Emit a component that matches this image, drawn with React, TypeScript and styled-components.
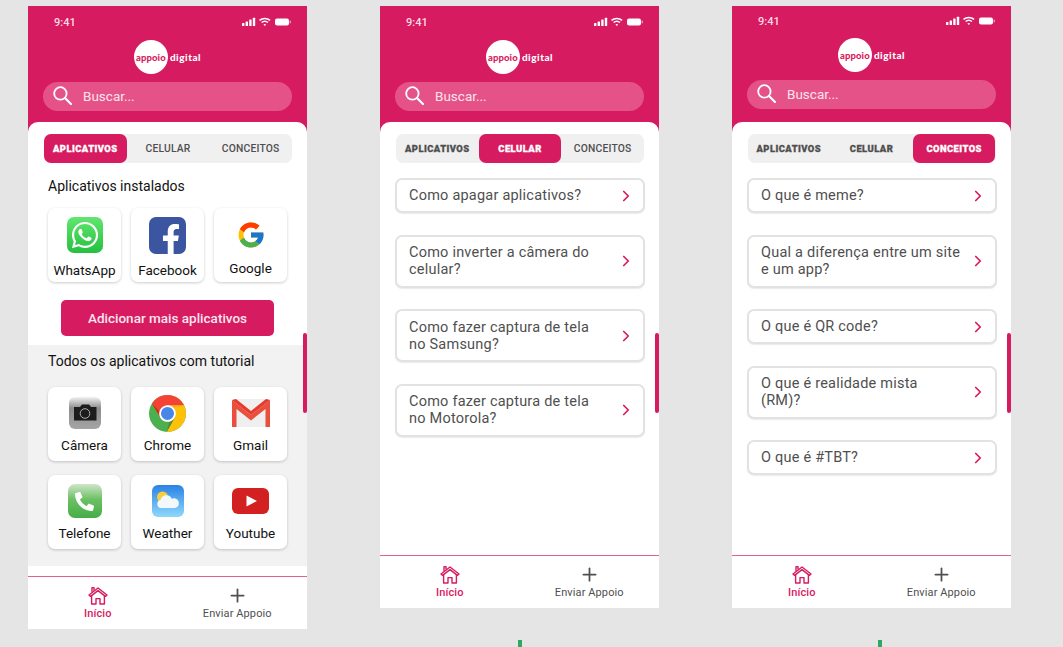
import React from 'react'
import styled, { createGlobalStyle } from 'styled-components'
import { ChevronRight, Plus } from 'lucide-react'
import { FcGoogle } from 'react-icons/fc'
import { FaFacebookF, FaWhatsapp, FaPhoneAlt } from 'react-icons/fa'

const PINK = '#d71b60'

const GlobalStyle = createGlobalStyle`
  html, body {
    margin: 0;
    padding: 0;
    background: #e5e5e5;
    font-family: Roboto, 'Liberation Sans', sans-serif;
  }
`

const Page = styled.div`
  width: 1063px;
  height: 647px;
  box-sizing: border-box;
  padding: 6px 0 0 28px;
  display: flex;
  align-items: flex-start;
  gap: 73px;
  overflow: hidden;
  background: #e5e5e5;
`

const Column = styled.div`
  display: flex;
  flex-direction: column;
  width: 279px;
`

const Phone = styled.div<{ $height: number }>`
  position: relative;
  width: 279px;
  height: ${p => p.$height}px;
  display: flex;
  flex-direction: column;
  background: ${PINK};
  flex-shrink: 0;
`

const Tick = styled.div<{ $left: number }>`
  width: 4px;
  height: 8px;
  margin: 32px 0 0 ${p => p.$left}px;
  background: #2fa866;
`

const ScrollThumb = styled.div`
  position: absolute;
  right: 0;
  top: 327px;
  width: 4px;
  height: 80px;
  border-radius: 2px;
  background: ${PINK};
`

const Header = styled.header<{ $tight?: boolean }>`
  height: 116px;
  box-sizing: border-box;
  flex-shrink: 0;
  padding: ${p => (p.$tight ? '7px' : '8px')} 15px 0;
  display: flex;
  flex-direction: column;
  align-items: center;
`

const StatusBar = styled.div`
  width: 100%;
  height: 16px;
  box-sizing: border-box;
  padding: 0 0 0 11px;
  display: flex;
  align-items: center;
  justify-content: space-between;
  color: #fbdbe6;
  font-size: 11px;
  font-weight: 500;
`

const Logo = styled.div<{ $tight?: boolean }>`
  margin-top: ${p => (p.$tight ? '9px' : '10px')};
  display: flex;
  align-items: center;
  gap: 2px;
`

const LogoCircle = styled.div`
  width: 34px;
  height: 34px;
  border-radius: 50%;
  background: #fff;
  display: flex;
  align-items: center;
  justify-content: center;
  color: ${PINK};
  font-family: Lato, sans-serif;
  font-size: 9.5px;
  font-weight: 900;
  letter-spacing: 0.1px;
`

const LogoWord = styled.span`
  color: #fff;
  font-family: Lato, sans-serif;
  font-size: 10px;
  font-weight: 900;
  letter-spacing: 0.5px;
`

const SearchBar = styled.div`
  width: 249px;
  height: 29px;
  margin-top: 8px;
  box-sizing: border-box;
  padding: 0 0 2px 10px;
  display: flex;
  align-items: center;
  gap: 11px;
  border-radius: 15px;
  background: #e45287;
  color: #fde3ec;
  font-size: 13.5px;
`

const Card = styled.main`
  flex: 1;
  min-height: 0;
  padding-top: 12px;
  background: #fff;
  border-radius: 10px 10px 0 0;
  overflow: hidden;
`

const Tabs = styled.div<{ $inset: number }>`
  width: 248px;
  height: 29px;
  margin-left: ${p => p.$inset}px;
  display: grid;
  grid-template-columns: repeat(3, 1fr);
  border-radius: 7px;
  background: #f0f0f0;
`

const Tab = styled.div<{ $active?: boolean; $blob?: boolean }>`
  display: flex;
  align-items: center;
  justify-content: center;
  border-radius: 7px;
  background: ${p => (p.$active ? PINK : 'transparent')};
  color: ${p => (p.$active ? '#fff' : '#4f4f4f')};
  font-size: ${p => (p.$blob ? '9.4px' : '10.3px')};
  font-weight: ${p => (p.$blob ? 900 : 500)};
  letter-spacing: ${p => (p.$blob ? '0.45px' : '0.2px')};
  -webkit-text-stroke: ${p => (p.$blob ? '0.3px' : '0')};
`

const SectionTitle = styled.h2<{ $top: number }>`
  margin: ${p => p.$top}px 0 0 20px;
  font-size: 14px;
  font-weight: 400;
  line-height: 18px;
  color: #111;
`

const AppGrid = styled.div<{ $top: number }>`
  margin: ${p => p.$top}px 0 0 20px;
  display: grid;
  grid-template-columns: repeat(3, 73px);
  grid-auto-rows: 74px;
  gap: 14px 10px;
`

const AppCard = styled.div<{ $gap: number; $top: number }>`
  box-sizing: border-box;
  padding-top: ${p => p.$top}px;
  display: flex;
  flex-direction: column;
  align-items: center;
  gap: ${p => p.$gap}px;
  border-radius: 7px;
  background: #fff;
  box-shadow: 0 1px 3px rgba(0, 0, 0, 0.2);
`

const AppIconSlot = styled.div`
  height: 40px;
  display: flex;
  align-items: center;
  justify-content: center;
`

const AppLabel = styled.span`
  font-size: 13.5px;
  line-height: 16px;
  color: #111;
`

const Tile = styled.div<{ $bg: string; $size: number }>`
  width: ${p => p.$size}px;
  height: ${p => p.$size}px;
  border-radius: 7px;
  background: ${p => p.$bg};
  display: flex;
  align-items: center;
  justify-content: center;
  overflow: hidden;
  color: #fff;
`

const AddButton = styled.button`
  display: block;
  width: 213px;
  height: 36px;
  margin: 18px 0 9px 33px;
  border: 0;
  border-radius: 5px;
  background: ${PINK};
  color: #fbe6ee;
  font-family: inherit;
  font-size: 13.5px;
  font-weight: 500;
`

const GraySection = styled.section`
  padding: 7px 0 17px;
  background: #f2f2f2;
`

const QuestionList = styled.div`
  margin: 15px 0 0 15px;
  width: 250px;
  display: flex;
  flex-direction: column;
  gap: 21.5px;
`

const Question = styled.div<{ $tall: boolean }>`
  box-sizing: border-box;
  height: ${p => (p.$tall ? 53 : 35)}px;
  padding: 0 8px 0 12px;
  display: flex;
  align-items: center;
  justify-content: space-between;
  border: 2px solid #e2e2e2;
  border-radius: 7px;
  background: #fff;
  box-shadow: 0 1px 1px rgba(0, 0, 0, 0.08);
  color: #4f4f4f;
  font-size: 14.5px;
  line-height: 17px;
  letter-spacing: 0.22px;
  svg {
    flex-shrink: 0;
    color: ${PINK};
  }
`

const QuestionText = styled.span`
  width: 200px;
`

const BottomNav = styled.nav`
  height: 53px;
  flex-shrink: 0;
  box-sizing: border-box;
  display: grid;
  grid-template-columns: 1fr 1fr;
  padding-top: 8px;
  border-top: 1px solid #e0628f;
  background: #fff;
`

const NavItem = styled.div<{ $active?: boolean }>`
  display: flex;
  flex-direction: column;
  align-items: center;
  color: ${p => (p.$active ? PINK : '#4f4f4f')};
  font-size: 11px;
  font-weight: ${p => (p.$active ? 500 : 400)};
  line-height: 14px;
  letter-spacing: 0.1px;
`

const NavIconSlot = styled.div`
  height: 21px;
  margin-bottom: 1px;
  display: flex;
  align-items: center;
  justify-content: center;
`

const StatusIcons = () => (
  <svg width="50" height="10" viewBox="0 0 50 10" fill="#fff">
    <rect x="0" y="6" width="2.4" height="3" rx="0.5" />
    <rect x="3.6" y="4.6" width="2.4" height="4.4" rx="0.5" />
    <rect x="7.2" y="2.6" width="2.4" height="6.4" rx="0.5" />
    <rect x="10.8" y="0.8" width="2.4" height="8.2" rx="0.5" />
    <path d="M17.5 3.4a8 8 0 0 1 10.6 0" fill="none" stroke="#fff" strokeWidth="1.5" />
    <path d="M19.6 5.5a5 5 0 0 1 6.4 0" fill="none" stroke="#fff" strokeWidth="1.5" />
    <path d="M21.4 7.4a2.4 2.4 0 0 1 2.8 0L22.8 9z" />
    <rect x="33" y="1.5" width="14" height="7" rx="2" />
    <rect x="47.6" y="3.6" width="1.2" height="2.8" rx="0.6" fill="#f3a7c3" />
  </svg>
)

const SearchIcon = () => (
  <svg width="19" height="19" viewBox="0 0 19 19" fill="none" stroke="#fff" strokeLinecap="round">
    <circle cx="7.4" cy="7.4" r="6.2" strokeWidth="1.8" />
    <path d="M12 12 L18 18" strokeWidth="2.2" />
  </svg>
)

const HomeIcon = () => (
  <svg width="20" height="19" viewBox="0 0 20 19" fill="none" stroke={PINK} strokeWidth="1.4" strokeLinejoin="round" strokeLinecap="round">
    <path d="M1 9 L10 2 L19 9 L17.4 10.4 L10 4.6 L2.6 10.4 Z" />
    <path d="M3.6 10 V18 H8 V12.6 H12 V18 H16.4 V10" />
    <path d="M4 5.6 V1.6 H6 V4" />
  </svg>
)

const Chrome = () => (
  <svg width="37" height="37" viewBox="4 4 40 40">
    <path fill="#4caf50" d="M44,24c0,11.045-8.955,20-20,20S4,35.045,4,24S12.955,4,24,4S44,12.955,44,24z" />
    <path fill="#ffc107" d="M24,4v20l8,4l-8.843,16c0.317,0,0.526,0,0.843,0c11.053,0,20-8.947,20-20S35.053,4,24,4z" />
    <path fill="#f44336" d="M41.84,15H24v13l-3-1L7.16,13.26H7.14C10.68,7.69,16.91,4,24,4C31.8,4,38.55,8.48,41.84,15z" />
    <path fill="#dd2c00" d="M7.158,13.264l8.843,14.862L21,27L7.158,13.264z" />
    <path fill="#558b2f" d="M23.157,44l8.934-16.059L28,25L23.157,44z" />
    <path fill="#f9a825" d="M41.865,15L24,15l-1.579,4.58L41.865,15z" />
    <path fill="#fff" d="M33,24c0,4.969-4.031,9-9,9s-9-4.031-9-9s4.031-9,9-9S33,19.031,33,24z" />
    <path fill="#4a86e8" d="M31,24c0,3.867-3.133,7-7,7s-7-3.133-7-7s3.133-7,7-7S31,20.133,31,24z" />
  </svg>
)

const Gmail = () => (
  <svg width="38" height="28" viewBox="0 0 38 28">
    <rect x="1" y="0" width="36" height="28" fill="#efefef" />
    <path d="M0 1 L19 16 L38 1 V28 H33.5 V10 L19 21.5 L4.5 10 V28 H0 Z" fill="#ea4e3d" />
    <path d="M0 1 L4 0 L19 12 L34 0 L38 1 L19 16 Z" fill="#e53a2c" />
  </svg>
)

const Camera = () => (
  <svg width="32" height="32" viewBox="0 0 32 32">
    <defs>
      <linearGradient id="cameraTile" x1="0" y1="0" x2="0" y2="1">
        <stop offset="0" stopColor="#f2f2f2" />
        <stop offset="0.35" stopColor="#8c8c8c" />
        <stop offset="1" stopColor="#a5a5a5" />
      </linearGradient>
    </defs>
    <rect width="32" height="32" rx="6" fill="url(#cameraTile)" />
    <path d="M5 10 H11 L13 7.5 H20 L22 10 H27.5 V23.5 H5 Z" fill="#1c1c1c" />
    <circle cx="16" cy="16.5" r="4.8" fill="none" stroke="#bdbdbd" strokeWidth="0.9" />
  </svg>
)

const Weather = () => (
  <svg width="32" height="32" viewBox="0 0 32 32">
    <defs>
      <linearGradient id="weatherTile" x1="0" y1="0" x2="0" y2="1">
        <stop offset="0" stopColor="#2a82e4" />
        <stop offset="1" stopColor="#8fd8fb" />
      </linearGradient>
    </defs>
    <rect width="32" height="32" rx="6" fill="url(#weatherTile)" />
    <circle cx="10.5" cy="12" r="5.5" fill="#f8cd3c" />
    <path d="M9 23 a4 4 0 0 1 -0.5 -7.9 a6 6 0 0 1 11.3 -1.4 a4.8 4.8 0 0 1 7 4.4 a4.6 4.6 0 0 1 -3.8 4.9 Z" fill="#f3f8fc" />
  </svg>
)

const Youtube = () => (
  <svg width="37" height="26" viewBox="0 0 37 26">
    <rect width="37" height="26" rx="6" fill="#d32020" />
    <path d="M14.5 7.5 L25 13 L14.5 18.5 Z" fill="#fff" />
  </svg>
)

const Whatsapp = () => (
  <Tile $size={36} $bg="linear-gradient(#62e66f, #25c03f)">
    <FaWhatsapp size={30} />
  </Tile>
)

const Facebook = () => (
  <Tile $size={37} $bg="#3b55a0">
    <FaFacebookF size={30} style={{ marginTop: 8, marginLeft: 6 }} />
  </Tile>
)

const Telefone = () => (
  <Tile $size={34} $bg="linear-gradient(#cfe6c9 0%, #6cc064 45%, #46ad47 100%)">
    <FaPhoneAlt size={19} />
  </Tile>
)

const installedApps = [
  { name: 'WhatsApp', icon: <Whatsapp />, top: 7, gap: 7 },
  { name: 'Facebook', icon: <Facebook />, top: 7, gap: 7 },
  { name: 'Google', icon: <FcGoogle size={30} />, top: 7, gap: 5 }
]

const tutorialApps = [
  { name: 'Câmera', icon: <Camera /> },
  { name: 'Chrome', icon: <Chrome /> },
  { name: 'Gmail', icon: <Gmail /> },
  { name: 'Telefone', icon: <Telefone /> },
  { name: 'Weather', icon: <Weather /> },
  { name: 'Youtube', icon: <Youtube /> }
]

const tabNames = ['APLICATIVOS', 'CELULAR', 'CONCEITOS']

interface ShellProps {
  height: number
  activeTab: number
  plainTabs: number[]
  inset: number
  tight?: boolean
  children: React.ReactNode
}

const PhoneShell: React.FC<ShellProps> = ({ height, activeTab, plainTabs, inset, tight, children }) => (
  <Phone $height={height}>
    <Header $tight={tight}>
      <StatusBar>
        9:41
        <StatusIcons />
      </StatusBar>
      <Logo $tight={tight}>
        <LogoCircle>appoio</LogoCircle>
        <LogoWord>digital</LogoWord>
      </Logo>
      <SearchBar>
        <SearchIcon />
        Buscar...
      </SearchBar>
    </Header>
    <Card>
      <Tabs $inset={inset}>
        {tabNames.map((name, i) => (
          <Tab key={name} $active={i === activeTab} $blob={!plainTabs.includes(i)}>
            {name}
          </Tab>
        ))}
      </Tabs>
      {children}
    </Card>
    <BottomNav>
      <NavItem $active>
        <NavIconSlot>
          <HomeIcon />
        </NavIconSlot>
        Início
      </NavItem>
      <NavItem>
        <NavIconSlot>
          <Plus size={21} strokeWidth={2} />
        </NavIconSlot>
        Enviar Appoio
      </NavItem>
    </BottomNav>
    <ScrollThumb />
  </Phone>
)

const QuestionRows: React.FC<{ items: string[] }> = ({ items }) => (
  <QuestionList>
    {items.map(text => (
      <Question key={text} $tall={text.length > 26}>
        <QuestionText>{text}</QuestionText>
        <ChevronRight size={18} strokeWidth={2.3} />
      </Question>
    ))}
  </QuestionList>
)

const App: React.FC = () => (
  <Page>
    <GlobalStyle />
    <Column>
      <PhoneShell height={623} activeTab={0} plainTabs={[1, 2]} inset={16}>
        <SectionTitle $top={14}>Aplicativos instalados</SectionTitle>
        <AppGrid $top={13}>
          {installedApps.map(app => (
            <AppCard key={app.name} $top={app.top} $gap={app.gap}>
              <AppIconSlot>{app.icon}</AppIconSlot>
              <AppLabel>{app.name}</AppLabel>
            </AppCard>
          ))}
        </AppGrid>
        <AddButton>Adicionar mais aplicativos</AddButton>
        <GraySection>
          <SectionTitle $top={0}>Todos os aplicativos com tutorial</SectionTitle>
          <AppGrid $top={17}>
            {tutorialApps.map(app => (
              <AppCard key={app.name} $top={6} $gap={4}>
                <AppIconSlot>{app.icon}</AppIconSlot>
                <AppLabel>{app.name}</AppLabel>
              </AppCard>
            ))}
          </AppGrid>
        </GraySection>
      </PhoneShell>
    </Column>
    <Column>
      <PhoneShell height={602} activeTab={1} plainTabs={[2]} inset={16}>
        <QuestionRows
          items={[
            'Como apagar aplicativos?',
            'Como inverter a câmera do celular?',
            'Como fazer captura de tela no Samsung?',
            'Como fazer captura de tela no Motorola?'
          ]}
        />
      </PhoneShell>
      <Tick $left={138} />
    </Column>
    <Column>
      <PhoneShell height={602} activeTab={2} plainTabs={[]} inset={15.5} tight>
        <QuestionRows
          items={[
            'O que é meme?',
            'Qual a diferença entre um site e um app?',
            'O que é QR code?',
            'O que é realidade mista (RM)?',
            'O que é #TBT?'
          ]}
        />
      </PhoneShell>
      <Tick $left={146} />
    </Column>
  </Page>
)

export default App
